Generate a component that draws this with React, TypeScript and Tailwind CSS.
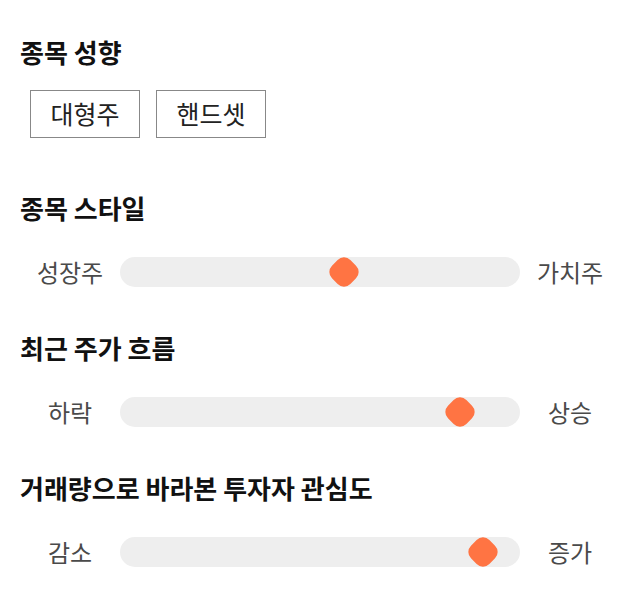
import React from 'react';

const font = { fontFamily: '"Noto Sans CJK KR", "Noto Sans", sans-serif' };

type SliderProps = { left: string; right: string; value: number };

// value = thumb centre, as a fraction of the track width
function Slider({ left, right, value }: SliderProps) {
  return (
    <div className="flex items-center h-[30px] mt-[33px]">
      <div className="w-[100px] text-center text-[24px] text-[#4a4a4a] leading-none">{left}</div>
      <div className="relative w-[400px] h-[30px] rounded-full bg-[#eeeeee]">
        <div
          className="absolute top-1/2 w-[26px] h-[26px] rounded-[9px] bg-[#ff7443]"
          style={{ left: `${value * 100}%`, transform: 'translate(-50%, -50%) rotate(45deg)' }}
        />
      </div>
      <div className="w-[100px] text-center text-[24px] text-[#4a4a4a] leading-none">{right}</div>
    </div>
  );
}

export default function App() {
  return (
    <div className="w-[640px] h-[606px] bg-white pl-[20px] pt-[36px]" style={font}>
      <h2 className="text-[26px] font-bold leading-[32px] text-[#111111]">종목 성향</h2>
      <div className="flex gap-[16px] ml-[10px] mt-[22px]">
        <span className="w-[110px] h-[48px] flex items-center justify-center border border-[#888888] text-[25px] text-[#222222]">대형주</span>
        <span className="w-[110px] h-[48px] flex items-center justify-center border border-[#888888] text-[25px] text-[#222222]">핸드셋</span>
      </div>

      <div className="mt-[54px]">
        <h2 className="text-[26px] font-bold leading-[32px] text-[#111111]">종목 스타일</h2>
        <Slider left="성장주" right="가치주" value={0.56} />
      </div>

      <div className="mt-[45px]">
        <h2 className="text-[26px] font-bold leading-[32px] text-[#111111]">최근 주가 흐름</h2>
        <Slider left="하락" right="상승" value={0.85} />
      </div>

      <div className="mt-[45px]">
        <h2 className="text-[26px] font-bold leading-[32px] text-[#111111]">거래량으로 바라본 투자자 관심도</h2>
        <Slider left="감소" right="증가" value={0.908} />
      </div>
    </div>
  );
}
